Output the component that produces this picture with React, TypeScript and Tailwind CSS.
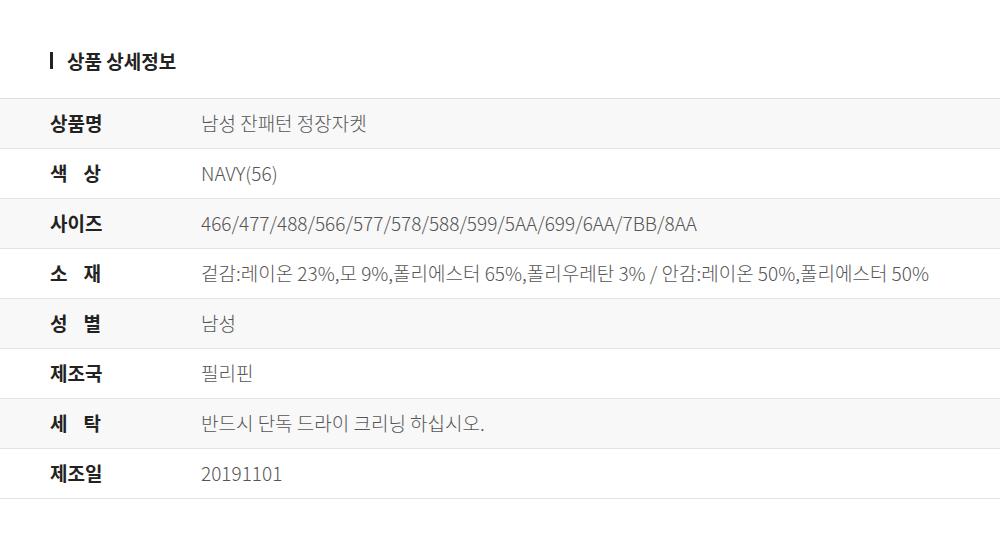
import React from "react";

const rows: { label: string[]; value: string }[] = [
  { label: ["상품명"], value: "남성 잔패턴 정장자켓" },
  { label: ["색", "상"], value: "NAVY(56)" },
  { label: ["사이즈"], value: "466/477/488/566/577/578/588/599/5AA/699/6AA/7BB/8AA" },
  { label: ["소", "재"], value: "겉감:레이온 23%,모 9%,폴리에스터 65%,폴리우레탄 3% / 안감:레이온 50%,폴리에스터 50%" },
  { label: ["성", "별"], value: "남성" },
  { label: ["제조국"], value: "필리핀" },
  { label: ["세", "탁"], value: "반드시 단독 드라이 크리닝 하십시오." },
  { label: ["제조일"], value: "20191101" },
];

export default function App() {
  return (
    <div
      className="w-[1000px] h-[548px] bg-white"
      style={{ fontFamily: '"Noto Sans CJK KR", "Noto Sans", sans-serif' }}
    >
      <div className="pt-[48px] pl-[50px] flex items-center h-[98px] pb-[26px]">
        <div className="w-[3px] h-[17px] bg-[#222]" />
        <div className="ml-[14px] text-[19px] font-bold text-[#222] leading-none">상품 상세정보</div>
      </div>
      <div className="border-t border-[#dedede]">
        {rows.map((r, i) => (
          <div
            key={i}
            className={`flex items-center h-[50px] border-b border-[#e3e3e3] ${i % 2 === 0 ? "bg-[#f8f8f8]" : "bg-white"}`}
          >
            <div className="w-[201px] pl-[50px] shrink-0">
              {r.label.length === 1 ? (
                <span className="text-[19px] font-bold text-[#222]">{r.label[0]}</span>
              ) : (
                <span className="flex justify-between w-[51px] text-[19px] font-bold text-[#222]">
                  <span>{r.label[0]}</span>
                  <span>{r.label[1]}</span>
                </span>
              )}
            </div>
            <div className="text-[19px] text-[#555] font-light">{r.value}</div>
          </div>
        ))}
      </div>
    </div>
  );
}
